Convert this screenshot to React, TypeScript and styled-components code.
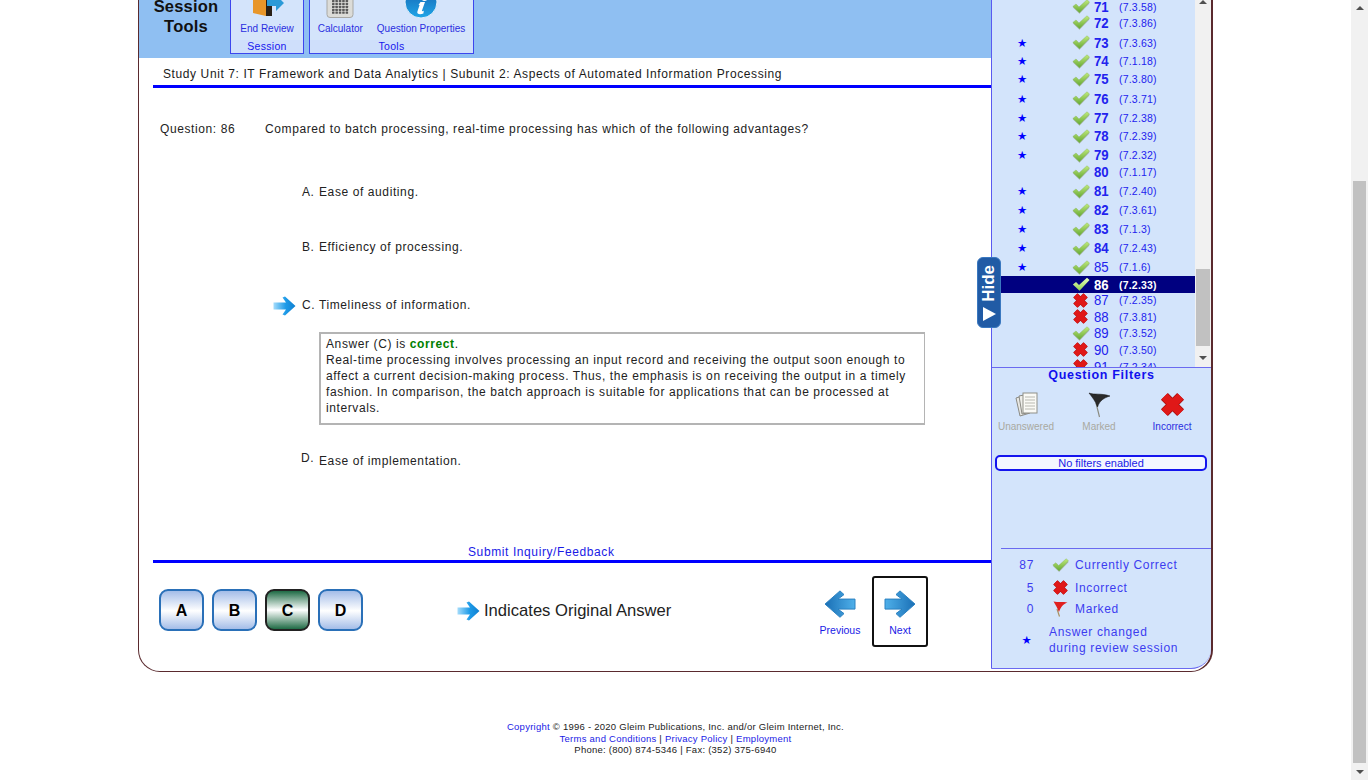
import React from "react";
import styled, { createGlobalStyle } from "styled-components";

const Global = createGlobalStyle`
  html, body { margin: 0; padding: 0; height: 100%; overflow: hidden; background: #fff; }
  body { font-family: "Liberation Sans", Arial, sans-serif; }
  svg { display: block; flex: none; }
`;

const Viewport = styled.div`
  display: flex; width: 1368px; height: 780px; overflow: hidden; background: #fff;
`;
const Page = styled.div`
  width: 1351px; height: 780px; overflow: hidden; display: flex; flex-direction: column; align-items: flex-start;
`;
const PageScroll = styled.div`
  display: flex; width: 17px; height: 780px; flex-direction: column; background: #f1f1f1; align-items: center;
`;
const ScrollArrow = styled.div<{ $down?: boolean }>`
  width: 0; height: 0; margin: ${p => (p.$down ? "6px 0 6px" : "6px 0 5px")};
  border-left: 4px solid transparent; border-right: 4px solid transparent;
  ${p => (p.$down ? "border-top: 4px solid #505050;" : "border-bottom: 4px solid #505050;")}
`;
const ScrollTrack = styled.div`
  flex: 1; width: 100%; display: flex; flex-direction: column; padding: 0 2px; box-sizing: border-box;
`;
const ScrollThumb = styled.div<{ $top: number; $h: number }>`
  margin-top: ${p => p.$top}px; height: ${p => p.$h}px; background: #c1c1c1;
`;

const Card = styled.div`
  position: relative; margin: -40px 0 0 138px; width: 1075px; height: 712px; box-sizing: border-box;
  border-style: solid; border-color: #5a2a2e; border-width: 0 2px 1.5px 1px; border-radius: 0 0 22px 22px;
  display: flex; overflow: hidden; background: #fff;
`;
const Left = styled.div`
  width: 852px; flex: none; display: flex; flex-direction: column;
`;
const Ribbon = styled.div`
  height: 98px; flex: none; background: #8fbff2; display: flex; align-items: flex-start; box-sizing: border-box; padding-left: 6px;
`;
const RibbonTitle = styled.div`
  width: 82px; margin: 37px 3px 0 0; text-align: center; font-size: 16.5px; line-height: 19.5px; font-weight: 700; color: #111; letter-spacing: .2px;
`;
const RibbonGroup = styled.div<{ $w: number }>`
  width: ${p => p.$w}px; margin-right: 5px; height: 94px; box-sizing: border-box; border: 1px solid #3c46ee; border-top: none;
  display: flex; flex-direction: column; background: #d4e4fb;
`;
const RibbonItems = styled.div`
  flex: 1; display: flex; gap: 14px; justify-content: center;
`;
const RibbonItem = styled.div`
  display: flex; flex-direction: column; align-items: center; color: #2a2ee0; font-size: 10px; padding-top: 23px;
`;
const RibbonIcon = styled.div`
  height: 38px; display: flex; justify-content: center; align-items: flex-start;
`;
const RibbonLabel = styled.div`
  margin-top: 1px; line-height: 13px; white-space: nowrap;
`;
const RibbonGroupName = styled.div`
  height: 13px; line-height: 13px; text-align: center; font-size: 10.5px; background: #cfdffb; color: #1616ee; letter-spacing: .3px;
`;

const UnitLine = styled.div`
  margin: 7px 0 0 14px; height: 20px; border-bottom: 3px solid #0000ff; font-size: 12px; letter-spacing: .6px; line-height: 18px; color: #1a1a1a; padding-left: 10px;
`;
const QuestionBody = styled.div`
  flex: 1; display: flex; flex-direction: column; position: relative; font-size: 12px; letter-spacing: .6px; color: #222; padding-left: 21px;
`;
const QuestionLine = styled.div`
  display: flex; margin-top: 33px; line-height: 16px; height: 16px;
`;
const QuestionNo = styled.div`
  width: 105px; flex: none;
`;
const Choice = styled.div<{ $mt: number }>`
  display: flex; margin-top: ${p => p.$mt}px; align-items: flex-start; line-height: 16px; position: relative; padding-left: 142px;
`;
const ChoiceLetter = styled.div<{ $up?: boolean }>`
  width: 17px; flex: none; margin-top: ${p => (p.$up ? "-3px" : "0")}; position: relative; left: ${p => (p.$up ? "-1px" : "0")};
`;
const OriginalMark = styled.div`
  position: absolute; left: 113px; top: -1px;
`;
const Feedback = styled.div`
  margin: 19px 0 0 159px; width: 606px; box-sizing: border-box; border: 2px solid #b4b4b4; border-width: 2px 1px 2px 2px;
  padding: 2px 6px 7px 5px; line-height: 16px; height: 93px;
`;
const Correct = styled.strong`
  color: #008000;
`;
const InquiryLink = styled.div`
  position: absolute; left: 329px; bottom: 0px; color: #1a1ae6; line-height: 16px; font-size: 12px;
`;
const Rule = styled.div`
  height: 3px; background: #0000ff; margin-left: 14px; flex: none;
`;
const FooterBar = styled.div`
  height: 108px; flex: none; display: flex; position: relative; align-items: flex-start;
`;
const AnswerKeys = styled.div`
  display: flex; gap: 8px; margin: 26px 0 0 20px; width: 298px; flex: none;
`;
const KeyButton = styled.div<{ $on?: boolean }>`
  width: 45px; height: 42px; box-sizing: border-box; border-radius: 9px; display: flex; align-items: center; justify-content: center;
  font-weight: 700; font-size: 16px; color: #000; padding-top: 1px;
  border: 2px solid ${p => (p.$on ? "#222" : "#2a70b8")};
  background: ${p => p.$on
    ? "linear-gradient(#1f6b45 0%, #ffffff 50%, #1f6b45 100%)"
    : "linear-gradient(#a4bde8 0%, #ffffff 52%, #a4bde8 100%)"};
`;
const OriginalLegend = styled.div`
  display: flex; align-items: center; gap: 4px; margin-top: 36px; font-size: 16.6px; color: #222; width: 355px; flex: none; height: 24px;
`;
const NavButton = styled.div<{ $boxed?: boolean }>`
  width: 56px; height: 71px; box-sizing: border-box; margin-top: 13px; display: flex; flex-direction: column; align-items: center;
  color: #1a1ae6; font-size: 10.5px; padding-top: 12px; border-radius: 3px; border: 2px solid ${p => (p.$boxed ? "#111" : "transparent")};
  margin-left: ${p => (p.$boxed ? "4px" : "0")};
`;
const NavLabel = styled.div`
  margin-top: 6px; line-height: 13px; white-space: nowrap;
`;

const Side = styled.div`
  width: 220px; flex: none; display: flex; flex-direction: column; background: #d3e4fb; border-left: 1px solid #5a5af0;
  border-bottom: 1px solid #6a6af0; border-bottom-right-radius: 20px; box-sizing: border-box; margin-bottom: 2px;
`;
const ListPane = styled.div`
  height: 408px; flex: none; display: flex; border-bottom: 1px solid #6a6af0; box-sizing: border-box; overflow: hidden;
`;
const ListRows = styled.div`
  width: 203px; flex: none; padding-top: 38px; overflow: hidden; height: 100%; box-sizing: border-box;
`;
const Row = styled.div<{ $h: number; $active?: boolean }>`
  height: ${p => p.$h}px; margin-top: ${p => (p.$active ? "0.8px" : "0")};
  display: flex; align-items: flex-end; position: relative; color: ${p => (p.$active ? "#fff" : "#2222ee")};
  background: ${p => (p.$active ? "#000080" : "transparent")}; font-weight: ${p => (p.$active ? 700 : 400)};
`;
const RowStar = styled.div`
  position: absolute; left: 25px; bottom: 1px; font-size: 11.5px; line-height: 14px; color: #0000ff; font-family: "DejaVu Sans", sans-serif;
`;
const RowIcon = styled.div`
  margin-left: 79px; width: 19px; height: 16px; display: flex; justify-content: center; align-items: center;
`;
const RowNum = styled.div<{ $light?: boolean }>`
  width: 25px; margin-left: 4px; font-size: 14px; font-weight: ${p => (p.$light ? 400 : 700)}; line-height: 16px;
  transform: scaleX(.94); transform-origin: left;
`;
const RowRef = styled.div`
  font-size: 10.5px; line-height: 16px; letter-spacing: .2px; font-weight: inherit;
`;
const ListScroll = styled.div`
  width: 16px; flex: none; background: #f1f1f1; position: relative;
`;
const ListThumb = styled.div`
  position: absolute; left: 1px; right: 1px; bottom: 21px; height: 77px; background: #c1c1c1;
`;
const ListArrow = styled.div`
  position: absolute; left: 4px; bottom: 7px; width: 0; height: 0; border-left: 4px solid transparent; border-right: 4px solid transparent; border-top: 4px solid #505050;
`;
const ListArrowUp = styled.div`
  position: absolute; left: 4px; top: 40px; width: 0; height: 0; border-left: 4px solid transparent; border-right: 4px solid transparent; border-bottom: 4px solid #505050;
`;
const FiltersTitle = styled.div`
  text-align: center; color: #1010ee; font-weight: 700; font-size: 12.5px; line-height: 14px; letter-spacing: .7px;
`;
const FilterRow = styled.div`
  display: flex; margin: 8px 0 0 -2.5px; height: 45px;
`;
const Filter = styled.div<{ $on?: boolean }>`
  width: 73px; display: flex; flex-direction: column; align-items: center; font-size: 10px; color: ${p => (p.$on ? "#2a2ee0" : "#a9a9a0")};
`;
const FilterIcon = styled.div`
  height: 29px; display: flex; align-items: center; justify-content: center;
`;
const FilterText = styled.div`
  line-height: 12px; margin-top: 2px;
`;
const FilterStatus = styled.div`
  margin: 20px 4px 0 3px; height: 16px; box-sizing: border-box; border: 2px solid #1414ee; border-radius: 5px; background: #f3f6ff;
  color: #1a1ae6; text-align: center; font-size: 11px; line-height: 12px;
`;
const Legend = styled.div`
  margin: 77px 0 0 9px; border-top: 1px solid #6a6af0; padding-top: 7px; color: #3c3cf0; font-size: 12px;
  display: flex; flex-direction: column; letter-spacing: .65px;
`;
const LegendRow = styled.div<{ $mt?: number }>`
  display: flex; align-items: center; min-height: 18px; margin-top: ${p => p.$mt ?? 0}px;
`;
const LegendCount = styled.div`
  width: 33px; text-align: right; flex: none;
`;
const LegendIcon = styled.div`
  width: 41px; flex: none; display: flex; justify-content: center; padding-left: 11px; box-sizing: border-box;
`;
const LegendStar = styled.div`
  width: 48px; flex: none; text-align: center; color: #0000ff; font-size: 11.5px; font-family: "DejaVu Sans", sans-serif; padding-left: 4px; box-sizing: border-box;
`;
const LegendNote = styled.div`
  line-height: 16px;
`;

const HideTab = styled.div`
  position: absolute; left: 838px; top: 297px; width: 24px; height: 71px; border-radius: 6px; background: #215ba5; border: 1px solid #3a78c0; box-sizing: border-box;
  display: flex; flex-direction: column; align-items: center; justify-content: flex-start; padding-top: 7px; gap: 5px; color: #fff; font-weight: 700; font-size: 17px; z-index: 2;
`;
const HideText = styled.div`
  writing-mode: vertical-rl; transform: rotate(180deg); white-space: nowrap; line-height: 22px;
`;
const HideArrow = styled.div`
  width: 0; height: 0; border-top: 7px solid transparent; border-bottom: 7px solid transparent; border-left: 13px solid #fff;
`;

const SiteFooter = styled.div`
  width: 1075px; margin: 49px 0 0 138px; text-align: center; font-size: 9.5px; line-height: 11.5px; color: #222; letter-spacing: .25px;
`;
const SiteLink = styled.span`
  color: #1a1ae6;
`;

const Check = ({ w = 18, active = false }: { w?: number; active?: boolean }) => {
  const id = active ? "cka" : "ck";
  return (
    <svg width={w} height={w * 0.83} viewBox="0 0 18 15">
      <defs>
        <linearGradient id={id} x1="0" y1="0" x2="0" y2="1">
          <stop offset="0" stopColor={active ? "#e8ffc0" : "#c0ea7c"} />
          <stop offset="1" stopColor={active ? "#8fd050" : "#64a832"} />
        </linearGradient>
      </defs>
      {!active && <path d="M1 8.500 4 6.500 7 9.500 15 2.500 17.500 4.500 7.500 14.800Z" fill="#9aa892" opacity=".7" />}
      <path d="M.8 7.500 4 5 7 8 15 .8 17.600 3 7.500 13.800Z" fill={`url(#${id})`} stroke={active ? "none" : "#7fae55"} strokeWidth=".4" strokeLinejoin="round" />
    </svg>
  );
};
const Cross = ({ w = 17 }: { w?: number }) => (
  <svg width={w} height={w} viewBox="0 0 16 16">
    <path d="M3.200 3.200 12.800 12.800M12.800 3.200 3.200 12.800" stroke="#a81010" strokeWidth="5.800" />
    <path d="M3.200 3.200 12.800 12.800M12.800 3.200 3.200 12.800" stroke="#e01818" strokeWidth="4.800" />
  </svg>
);
const ArrowIcon = ({ left, w = 32, id }: { left?: boolean; w?: number; id: string }) => (
  <svg width={w} height={w * 0.88} viewBox="0 0 32 28">
    <defs>
      <linearGradient id={id} x1="0" y1="0" x2="1" y2="0">
        <stop offset="0" stopColor="#4fb0ea" />
        <stop offset="1" stopColor="#1a6fb5" />
      </linearGradient>
    </defs>
    <g transform={left ? "translate(32 0) scale(-1 1)" : undefined}>
      <path d="M1 9H18L12 4.500 16 .8 31 14 16 27.200 12 23.500 18 19H1Z" fill={`url(#${id})`} stroke="#2a80c0" strokeWidth="1" strokeLinejoin="round" />
    </g>
  </svg>
);
const BlueArrow = ({ id, w = 23 }: { id: string; w?: number }) => (
  <svg width={w} height={w * 0.87} viewBox="0 0 23 20">
    <defs>
      <linearGradient id={id} x1="0" y1="0" x2="1" y2="0">
        <stop offset="0" stopColor="#a5dcfb" />
        <stop offset=".55" stopColor="#1e9be8" />
        <stop offset="1" stopColor="#0f7fd0" />
      </linearGradient>
    </defs>
    <path d="M.5 6.500H13L9.500 1.500 12 .5 22.500 10 12 19.500 9.500 18.500 13 13.500H.5Z" fill={`url(#${id})`} />
  </svg>
);
const DoorIcon = () => (
  <svg width="37" height="33" viewBox="-4 0 37 33">
    <path d="M1 0H14V33L1 30Z" fill="#e8962a" />
    <path d="M14 0H20V33H14Z" fill="#2a2016" />
    <path d="M15 17H24V12L32 20 24 28V23H15Z" fill="#2a9ad8" />
  </svg>
);
const CalcIcon = () => (
  <svg width="28" height="35" viewBox="0 0 28 35">
    <rect x="1" y="0" width="26" height="34.500" rx="3" fill="#dcdcd8" stroke="#a8a8a4" />
    {[0, 1, 2, 3, 4].map(r => [0, 1, 2, 3, 4].map(c => (
      <rect key={`${r}-${c}`} x={6 + c * 3.4} y={17 + r * 2.9} width="2.500" height="2.200" rx=".5" fill="#5a5a5a" />
    )))}
  </svg>
);
const InfoIcon = () => (
  <svg width="34" height="36" viewBox="0 0 34 36">
    <defs>
      <linearGradient id="inf" x1="0" y1="0" x2="0" y2="1">
        <stop offset="0" stopColor="#155fae" />
        <stop offset="1" stopColor="#20a6e8" />
      </linearGradient>
    </defs>
    <circle cx="17" cy="19" r="16" fill="url(#inf)" stroke="#e0eefa" />
    <path d="M14.500 22l2-3h4.500l-3 8.500c-.4 1 .3 1 1.800.3l-.4 2.700c-3 1.300-7 1-6-2l2.200-6.500Z" fill="#fff" />
    <circle cx="20.500" cy="15" r="3" fill="#fff" />
  </svg>
);
const PagesIcon = () => (
  <svg width="25" height="25" viewBox="0 0 25 25">
    <path d="M2 6 12 3 16 21 6 24Z" fill="#e8e8e4" stroke="#8a8a84" />
    <path d="M5 4 15 2 18 20 8 22Z" fill="#efefeb" stroke="#8a8a84" />
    <rect x="9" y="1" width="14" height="20" fill="#fafaf6" stroke="#8f8f88" />
    {[5, 8, 11, 14, 17].map(y => <path key={y} d={`M11 ${y}H21`} stroke="#b8b8b0" strokeWidth="1" />)}
  </svg>
);
const BlackFlag = () => (
  <svg width="23" height="26" viewBox="0 0 23 26">
    <path d="M8 11 11.500 25" stroke="#8a8a80" strokeWidth="1.200" />
    <path d="M1 1C6 3 13 1 22 4C16 6 12 8 9.500 15C7.500 9 4 5 1 1Z" fill="#2a2a2a" stroke="#111" strokeWidth=".5" />
  </svg>
);
const RedFlag = () => (
  <svg width="15" height="16" viewBox="0 0 15 16">
    <path d="M4 8 6.500 15.500" stroke="#a89060" strokeWidth="1.200" />
    <path d="M.5 .5C5 1.500 10 .5 14.500 1.500C11 3 8 5 6 11C4.500 7 2.500 4 .5 .5Z" fill="#e02020" />
  </svg>
);

type Q = { n: number; r: string; h: number; s?: boolean; x?: boolean; a?: boolean; l?: boolean };
const rows: Q[] = [
  { n: 71, r: "7.3.58", h: 16.6 }, { n: 72, r: "7.3.86", h: 16 }, { n: 73, r: "7.3.63", s: true, h: 20 }, { n: 74, r: "7.1.18", s: true, h: 18.6 },
  { n: 75, r: "7.3.80", s: true, h: 18 }, { n: 76, r: "7.3.71", s: true, h: 19.4 }, { n: 77, r: "7.2.38", s: true, h: 19.6 }, { n: 78, r: "7.2.39", s: true, h: 18 },
  { n: 79, r: "7.2.32", s: true, h: 19 }, { n: 80, r: "7.1.17", h: 17 }, { n: 81, r: "7.2.40", s: true, h: 19 }, { n: 82, r: "7.3.61", s: true, h: 19 },
  { n: 83, r: "7.1.3", s: true, h: 19 }, { n: 84, r: "7.2.43", s: true, h: 19 }, { n: 85, r: "7.1.6", s: true, l: true, h: 19 }, { n: 86, r: "7.2.33", a: true, h: 16.6 },
  { n: 87, r: "7.2.35", x: true, l: true, h: 15.8 }, { n: 88, r: "7.3.81", x: true, l: true, h: 16.6 }, { n: 89, r: "7.3.52", l: true, h: 16.5 }, { n: 90, r: "7.3.50", x: true, l: true, h: 16.5 },
  { n: 91, r: "7.2.34", x: true, l: true, h: 16.6 },
];

export default function App() {
  return (
    <Viewport>
      <Global />
      <Page>
        <Card>
          <Left>
            <Ribbon>
              <RibbonTitle>Session<br />Tools</RibbonTitle>
              <RibbonGroup $w={74}>
                <RibbonItems>
                  <RibbonItem><RibbonIcon><DoorIcon /></RibbonIcon><RibbonLabel>End Review</RibbonLabel></RibbonItem>
                </RibbonItems>
                <RibbonGroupName>Session</RibbonGroupName>
              </RibbonGroup>
              <RibbonGroup $w={165}>
                <RibbonItems>
                  <RibbonItem><RibbonIcon><CalcIcon /></RibbonIcon><RibbonLabel>Calculator</RibbonLabel></RibbonItem>
                  <RibbonItem><RibbonIcon><InfoIcon /></RibbonIcon><RibbonLabel>Question Properties</RibbonLabel></RibbonItem>
                </RibbonItems>
                <RibbonGroupName>Tools</RibbonGroupName>
              </RibbonGroup>
            </Ribbon>
            <UnitLine>Study Unit 7: IT Framework and Data Analytics | Subunit 2: Aspects of Automated Information Processing</UnitLine>
            <QuestionBody>
              <QuestionLine>
                <QuestionNo>Question: 86</QuestionNo>
                <div>Compared to batch processing, real-time processing has which of the following advantages?</div>
              </QuestionLine>
              <Choice $mt={47}><ChoiceLetter>A.</ChoiceLetter><div>Ease of auditing.</div></Choice>
              <Choice $mt={39}><ChoiceLetter>B.</ChoiceLetter><div>Efficiency of processing.</div></Choice>
              <Choice $mt={42}>
                <OriginalMark><BlueArrow id="oa1" /></OriginalMark>
                <ChoiceLetter>C.</ChoiceLetter><div>Timeliness of information.</div>
              </Choice>
              <Feedback>
                Answer (C) is <Correct>correct</Correct>.<br />
                Real-time processing involves processing an input record and receiving the output soon enough to affect a current decision-making process. Thus, the emphasis is on receiving the output in a timely fashion. In comparison, the batch approach is suitable for applications that can be processed at intervals.
              </Feedback>
              <Choice $mt={28}><ChoiceLetter $up>D.</ChoiceLetter><div>Ease of implementation.</div></Choice>
              <InquiryLink>Submit Inquiry/Feedback</InquiryLink>
            </QuestionBody>
            <Rule />
            <FooterBar>
              <AnswerKeys>
                <KeyButton>A</KeyButton><KeyButton>B</KeyButton><KeyButton $on>C</KeyButton><KeyButton>D</KeyButton>
              </AnswerKeys>
              <OriginalLegend><BlueArrow id="oa2" />Indicates Original Answer</OriginalLegend>
              <NavButton><ArrowIcon left id="nv1" />
                <NavLabel>Previous</NavLabel></NavButton>
              <NavButton $boxed><ArrowIcon id="nv2" /><NavLabel>Next</NavLabel></NavButton>
            </FooterBar>
          </Left>
          <Side>
            <ListPane>
              <ListRows>
                {rows.map(q => (
                  <Row key={q.n} $h={q.h} $active={q.a}>
                    {q.s && <RowStar>★</RowStar>}
                    <RowIcon>{q.x ? <Cross /> : <Check active={q.a} />}</RowIcon>
                    <RowNum $light={q.l}>{q.n}</RowNum>
                    <RowRef>({q.r})</RowRef>
                  </Row>
                ))}
              </ListRows>
              <ListScroll>
                <ListArrowUp />
                <ListThumb />
                <ListArrow />
              </ListScroll>
            </ListPane>
            <FiltersTitle>Question Filters</FiltersTitle>
            <FilterRow>
              <Filter><FilterIcon><PagesIcon /></FilterIcon><FilterText>Unanswered</FilterText></Filter>
              <Filter><FilterIcon><BlackFlag /></FilterIcon><FilterText>Marked</FilterText></Filter>
              <Filter $on><FilterIcon><Cross w={27} /></FilterIcon><FilterText>Incorrect</FilterText></Filter>
            </FilterRow>
            <FilterStatus>No filters enabled</FilterStatus>
            <Legend>
              <LegendRow><LegendCount>87</LegendCount><LegendIcon><Check w={17} /></LegendIcon><div>Currently Correct</div></LegendRow>
              <LegendRow $mt={4.5}><LegendCount>5</LegendCount><LegendIcon><Cross /></LegendIcon><div>Incorrect</div></LegendRow>
              <LegendRow $mt={3}><LegendCount>0</LegendCount><LegendIcon><RedFlag /></LegendIcon><div>Marked</div></LegendRow>
              <LegendRow $mt={6}><LegendStar>★</LegendStar><LegendNote>Answer changed<br />during review session</LegendNote></LegendRow>
            </Legend>
          </Side>
          <HideTab><HideText>Hide</HideText><HideArrow /></HideTab>
        </Card>
        <SiteFooter>
          <SiteLink>Copyright</SiteLink> © 1996 - 2020 Gleim Publications, Inc. and/or Gleim Internet, Inc.<br />
          <SiteLink>Terms and Conditions</SiteLink> | <SiteLink>Privacy Policy</SiteLink> | <SiteLink>Employment</SiteLink><br />
          Phone: (800) 874-5346 | Fax: (352) 375-6940
        </SiteFooter>
      </Page>
      <PageScroll>
        <ScrollArrow />
        <ScrollTrack><ScrollThumb $top={166} $h={582} /></ScrollTrack>
        <ScrollArrow $down />
      </PageScroll>
    </Viewport>
  );
}
